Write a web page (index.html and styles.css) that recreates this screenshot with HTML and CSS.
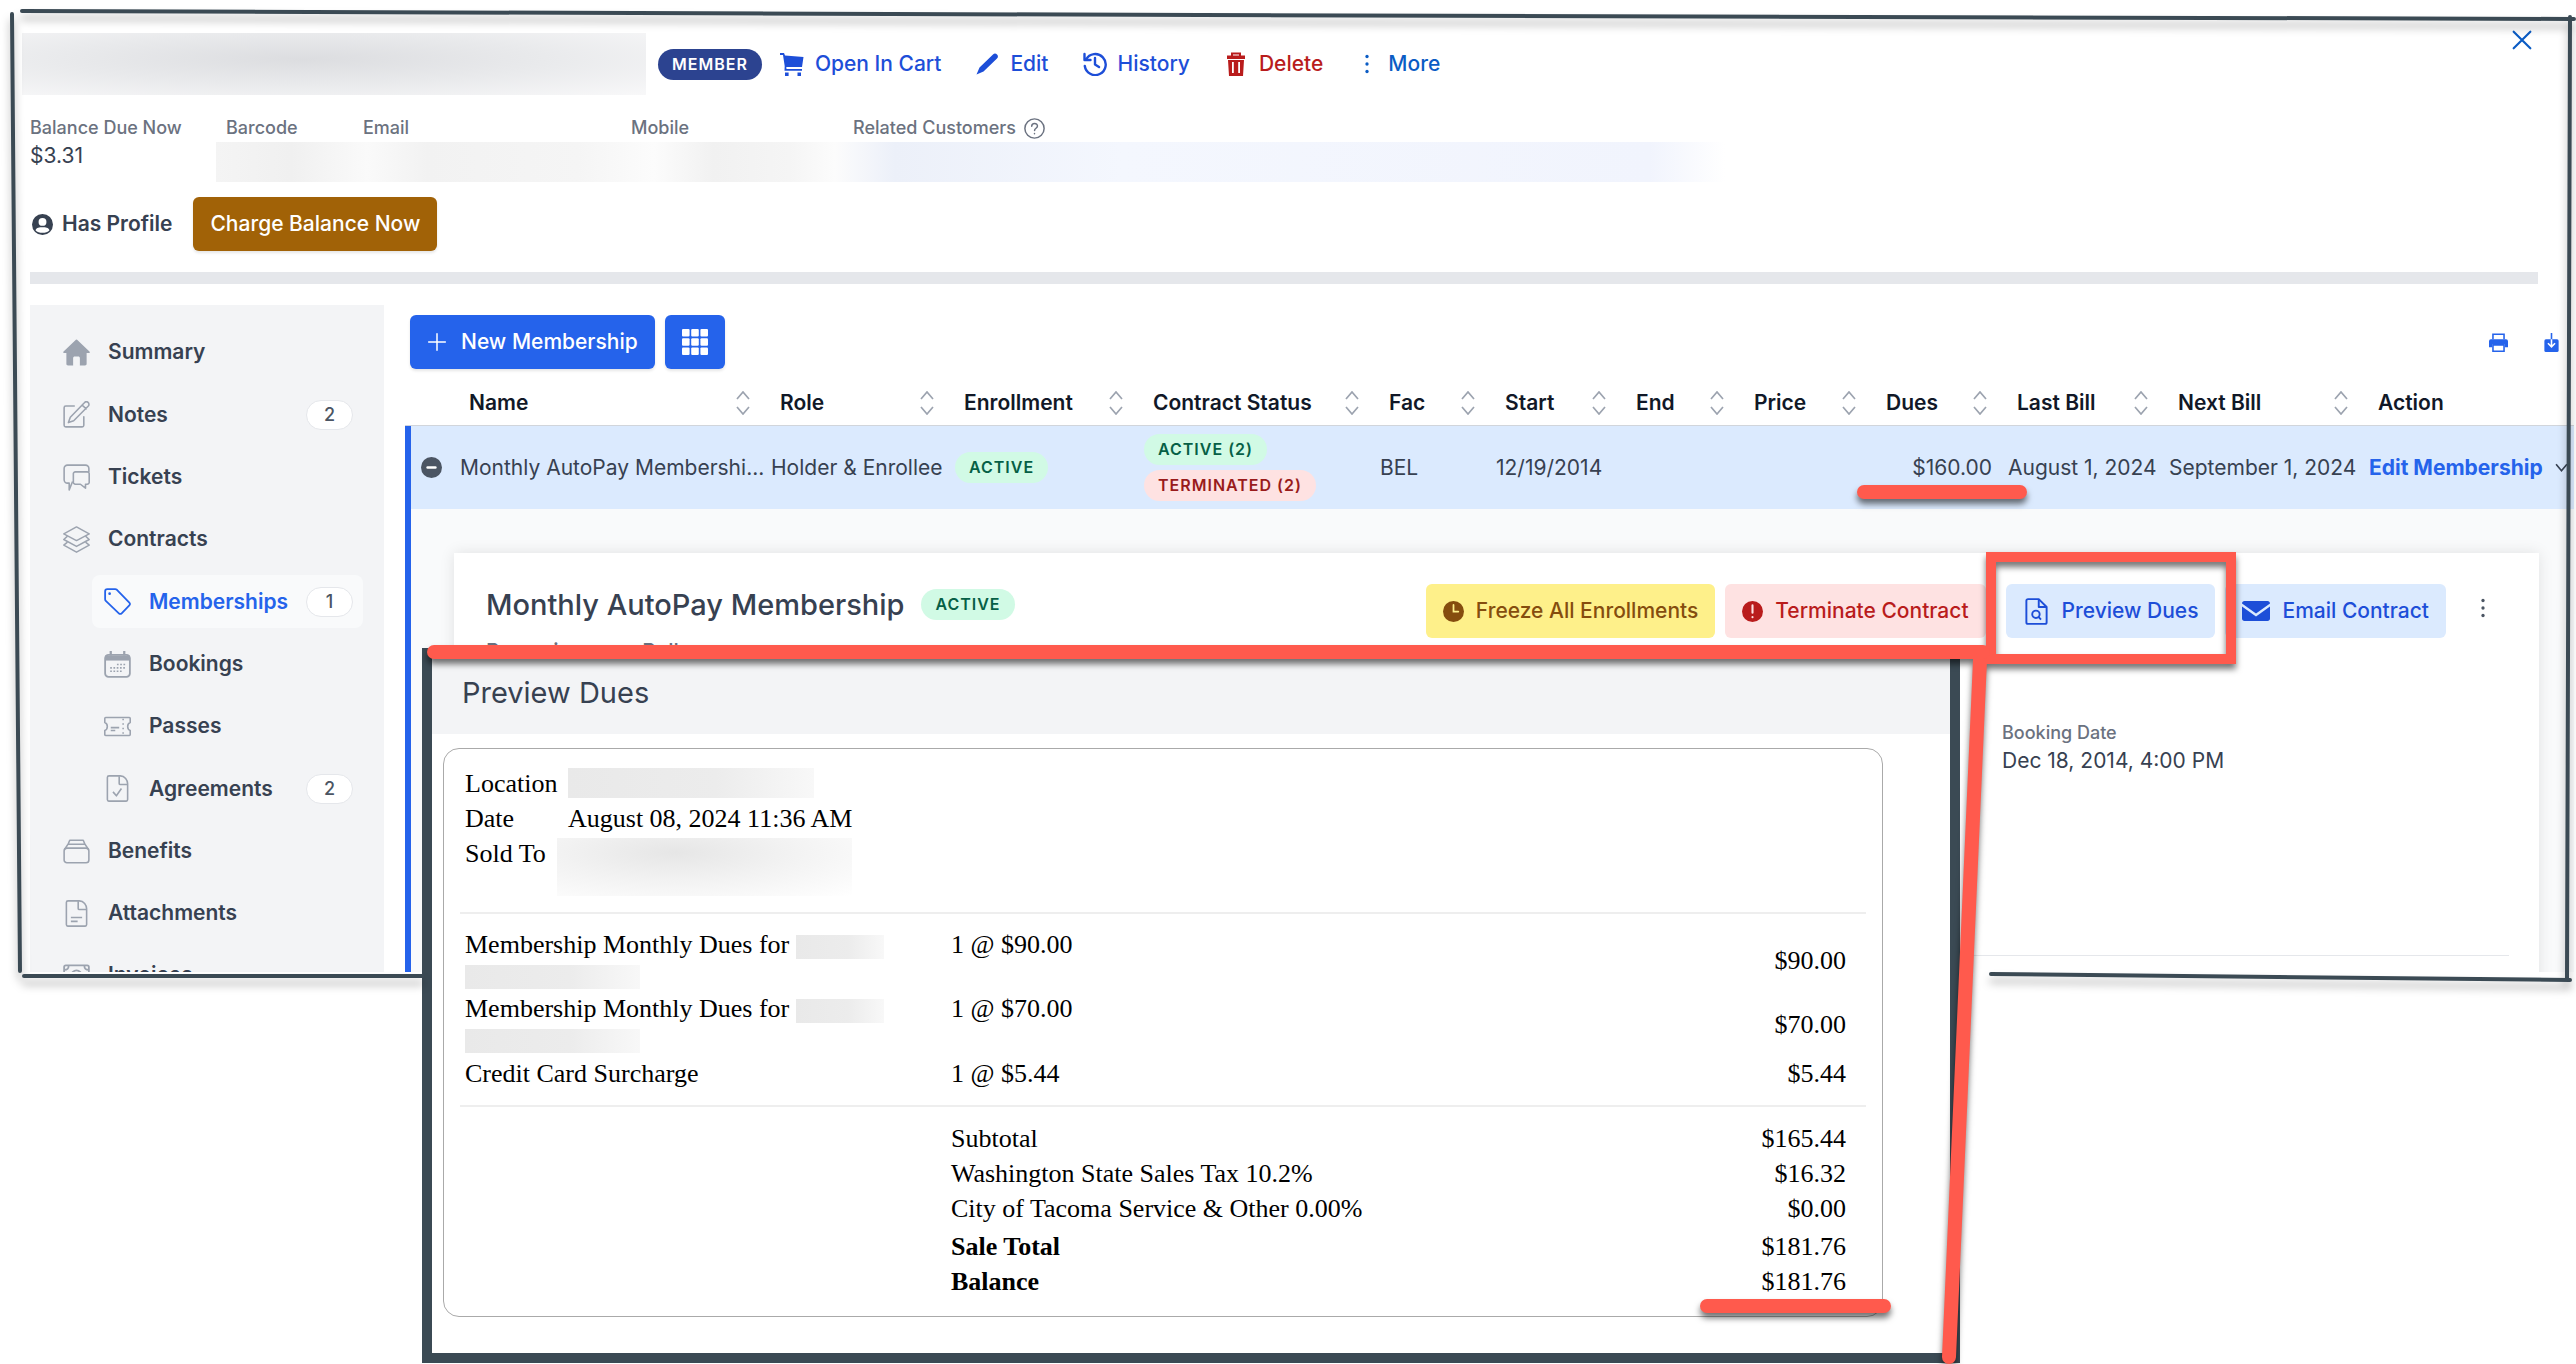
FILE: index.html
```html
<!DOCTYPE html>
<html lang="en">
<head>
  <meta charset="UTF-8">
  <meta name="viewport" content="width=device-width, initial-scale=1.0">
  <title>Customer - Memberships</title>
  <link rel="stylesheet" href="styles.css">
</head>
<body>
  <!-- icon set -->
  <svg class="sprite" aria-hidden="true">
    <symbol id="i-cart" viewBox="0 0 24 24"><path fill="currentColor" d="M0 1h4l1 2.500L23.500 5l-1.500 10H6.300l.2 2H22v1.800H4.500L4.700 14 3 3H0zM5 20.500h3.600V24H5zM17.500 20.500H21V24h-3.500z"/></symbol>
    <symbol id="i-pencil" viewBox="0 0 24 24"><path fill="currentColor" d="M18 2.500c1.500-1.500 3-1 4 0s1.500 2.500 0 4L8.500 19.500 1.500 22.500 4.500 15.500z"/></symbol>
    <symbol id="i-history" viewBox="0 0 24 24"><path fill="none" stroke="currentColor" stroke-width="2.400" stroke-linecap="round" stroke-linejoin="round" d="M3 7.500A10.500 10.500 0 1 1 1.800 14M1.500 2v6h6M12 6v6.500l4 2.500"/></symbol>
    <symbol id="i-trash" viewBox="0 0 24 24"><path fill="none" stroke="currentColor" stroke-width="2" d="M8 4V1.500h8V4"/><path fill="currentColor" fill-rule="evenodd" d="M3 3.500h18V7H3zM4 8h16l-1 16H5zM8 10v11h1.800V10zM14.200 10v11H16V10z"/></symbol>
    <symbol id="i-dots" viewBox="0 0 24 24"><circle cx="12" cy="3" r="2" fill="currentColor"/><circle cx="12" cy="12" r="2" fill="currentColor"/><circle cx="12" cy="21" r="2" fill="currentColor"/></symbol>
    <symbol id="i-help" viewBox="0 0 24 24"><g fill="none" stroke="currentColor" stroke-width="1.700" stroke-linecap="round"><circle cx="12" cy="12" r="11"/><path d="M8.800 9.500c0-4.500 6.600-4.300 6.600-.3 0 2.500-3.300 2.500-3.300 5M12 17.800v.2"/></g></symbol>
    <symbol id="i-user" viewBox="0 0 24 24"><path fill="currentColor" fill-rule="evenodd" d="M12 0a12 12 0 1 0 0 24 12 12 0 0 0 0-24zM12 4.500a4.500 4.500 0 1 1 0 9 4.500 4.500 0 0 1 0-9zM4 18.500c1.500-3.500 4-3.500 8-3.500s6.500 0 8 3.500c-3.500 4-12.500 4-16 0z"/></symbol>
    <symbol id="i-close" viewBox="0 0 24 24"><path stroke="currentColor" stroke-width="2.600" stroke-linecap="round" d="M2 2l20 20M22 2L2 22"/></symbol>
    <symbol id="i-home" viewBox="0 0 24 24"><path fill="currentColor" d="M12 0.500c.4 0 .7.200 1 .5l10.500 10c.8.800.3 1.500-.5 1.500h-2V22c0 1-.5 1.500-1.500 1.500H15V17c0-1-.5-1.500-1.500-1.500h-3C9.500 15.500 9 16 9 17v6.500H4.500C3.500 23.500 3 23 3 22v-9.500H1c-.8 0-1.300-.7-.5-1.500L11 1c.3-.3.600-.5 1-.5z"/></symbol>
    <symbol id="i-note" viewBox="0 0 24 24"><g fill="none" stroke="currentColor" stroke-width="1.400" stroke-linecap="round" stroke-linejoin="round"><path d="M10 4.500H2.500A1.500 1.500 0 0 0 1 6v15.500A1.500 1.500 0 0 0 2.500 23H17a1.500 1.500 0 0 0 1.500-1.500V14"/><path d="M19 1.500a2 2 0 0 1 3.500 3L9.500 17.500 4.800 19.200 6.500 14.500zM17 3.500l3.500 3.500"/></g></symbol>
    <symbol id="i-chat" viewBox="0 0 24 24"><g fill="none" stroke="currentColor" stroke-width="1.400" stroke-linejoin="round"><path d="M8.500 15.500L5.500 23v-6H4a3 3 0 0 1-3-3V4a3 3 0 0 1 3-3h16a3 3 0 0 1 3 3v3"/><path d="M11 7h10.500A1.800 1.800 0 0 1 23.300 9v7a1.800 1.800 0 0 1-1.800 2H20v3.500L15.500 18H11a1.800 1.800 0 0 1-1.800-2V9A1.800 1.800 0 0 1 11 7z"/></g></symbol>
    <symbol id="i-layers" viewBox="0 0 24 24"><g fill="none" stroke="currentColor" stroke-width="1.300" stroke-linejoin="round"><path d="M12 .8L23.300 7 12 13 .7 7z"/><path d="M4 9L.7 12 12 18.200 23.300 12 20 9"/><path d="M4 14.300L.7 17 12 23.300 23.300 17 20 14.300"/></g></symbol>
    <symbol id="i-tag" viewBox="0 0 24 24"><g fill="none" stroke="currentColor" stroke-width="1.600" stroke-linejoin="round"><path d="M1 3a2 2 0 0 1 2-2h7c.6 0 1 .2 1.500.6L22.500 13c.8.800.8 1.800 0 2.500l-6.800 7c-.7.700-1.800.7-2.500 0L1.600 11.500C1.200 11 1 10.600 1 10z"/></g><circle cx="5" cy="5" r="1.200" fill="currentColor"/></symbol>
    <symbol id="i-calendar" viewBox="0 0 24 24"><g fill="none" stroke="currentColor" stroke-width="1.600"><rect x="1" y="3.500" width="22" height="19.500" rx="3"/><path d="M6 0v4M18 0v4" stroke-width="2"/></g><path fill="currentColor" d="M1 4h22v4.500H1z"/><path stroke="currentColor" stroke-width="1.500" stroke-dasharray="1.500 1.400" d="M11.500 12H20M5.500 15H20M5.500 18h11.500"/></symbol>
    <symbol id="i-ticket" viewBox="0 0 24 24"><g fill="none" stroke="currentColor" stroke-width="1.400" stroke-linejoin="round"><path d="M1.500 4h21c.5 0 .8.300.8.800v3.700c-3 1-3 6 0 7v3.700c0 .5-.3.800-.8.800h-21c-.5 0-.8-.3-.8-.8v-3.700c3-1 3-6 0-7V4.800c0-.5.300-.8.800-.8z"/><path stroke-dasharray="1.500 2.500" d="M17 5v15"/><path d="M6 13h7.500M6 15.500h4"/></g></symbol>
    <symbol id="i-agreement" viewBox="0 0 24 24"><g fill="none" stroke="currentColor" stroke-width="1.400" stroke-linejoin="round"><path d="M4.500.8h10c4 0 6.500 4 6.500 7v14c0 .8-.4 1.400-1.200 1.400H4.200c-.8 0-1.200-.6-1.200-1.400V2.200C3 1.400 3.500.8 4.500.8z"/><path d="M13.500 1v6.500c0 .6.400 1 1 1H21M8 15l3 3.500 4.500-6.500"/></g></symbol>
    <symbol id="i-file" viewBox="0 0 24 24"><g fill="none" stroke="currentColor" stroke-width="1.400" stroke-linejoin="round"><path d="M4.500.8h10c4 0 6.500 4 6.500 7v14c0 .8-.4 1.400-1.200 1.400H4.200c-.8 0-1.200-.6-1.200-1.400V2.200C3 1.400 3.500.8 4.500.8z"/><path d="M13.500 1v6.500c0 .6.400 1 1 1H21M7 15.500h10M7 19h6"/></g></symbol>
    <symbol id="i-benefits" viewBox="0 0 24 24"><g fill="none" stroke="currentColor" stroke-width="1.400" stroke-linejoin="round"><rect x="1" y="9" width="22" height="13" rx="2.500"/><path d="M1.500 10l3-4.500h15l3 4.500M4.500 5.500L6 2h12l1.500 3.500"/></g></symbol>
    <symbol id="i-invoice" viewBox="0 0 24 24"><g fill="none" stroke="currentColor" stroke-width="1.600"><rect x="1" y="3" width="22" height="18" rx="1.500"/><circle cx="12" cy="12" r="4.500"/><path d="M1 7c3 0 4-1 4-4M23 7c-3 0-4-1-4-4" /></g></symbol>
    <symbol id="i-plus" viewBox="0 0 24 24"><path stroke="currentColor" stroke-width="1.800" stroke-linecap="round" d="M12 2v20M2 12h20"/></symbol>
    <symbol id="i-grid" viewBox="0 0 24 24"><g fill="currentColor"><rect width="7" height="7" rx="1"/><rect x="8.500" width="7" height="7" rx="1"/><rect x="17" width="7" height="7" rx="1"/><rect y="8.500" width="7" height="7" rx="1"/><rect x="8.500" y="8.500" width="7" height="7" rx="1"/><rect x="17" y="8.500" width="7" height="7" rx="1"/><rect y="17" width="7" height="7" rx="1"/><rect x="8.500" y="17" width="7" height="7" rx="1"/><rect x="17" y="17" width="7" height="7" rx="1"/></g></symbol>
    <symbol id="i-sort" viewBox="0 0 14 24"><path fill="none" stroke="currentColor" stroke-width="1.700" d="M1 8l6-7 6 7M1 16l6 7 6-7"/></symbol>
    <symbol id="i-printer" viewBox="0 0 24 24"><path fill="currentColor" d="M2.500 8h19A2.500 2.500 0 0 1 24 10.500V18h-4v-4H4v4H0v-7.500A2.500 2.500 0 0 1 2.500 8z"/><path fill="none" stroke="currentColor" stroke-width="2" d="M5 8V1.500h14V8M5 15h14v8H5z"/></symbol>
    <symbol id="i-download" viewBox="0 0 18 24"><rect y="8" width="18" height="16" rx="2" fill="currentColor"/><path fill="none" stroke="currentColor" stroke-width="2" d="M9 0v9"/><path fill="none" stroke="#fff" stroke-width="2" d="M9 8v9M4.500 13L9 17.500l4.500-4.500"/></symbol>
    <symbol id="i-minus" viewBox="0 0 24 24"><circle cx="12" cy="12" r="12" fill="currentColor"/><path stroke="#fff" stroke-width="2.800" stroke-linecap="round" d="M7.500 12h9"/></symbol>
    <symbol id="i-clock" viewBox="0 0 24 24"><circle cx="12" cy="12" r="12" fill="currentColor"/><path fill="none" stroke="#fef08a" stroke-width="2" stroke-linecap="round" d="M12 4.500V12h5.500"/></symbol>
    <symbol id="i-alert" viewBox="0 0 24 24"><circle cx="12" cy="12" r="12" fill="currentColor"/><path stroke="#fee2e2" stroke-width="2.400" stroke-linecap="round" d="M12 5v8.500M12 18.300v.2"/></symbol>
    <symbol id="i-preview" viewBox="0 0 24 24"><g fill="none" stroke="currentColor" stroke-width="1.700" stroke-linejoin="round"><path d="M4.500 1h9.500l7 7v13.500c0 .9-.5 1.500-1.300 1.500H4.300C3.500 23 3 22.400 3 21.500v-19C3 1.600 3.500 1 4.500 1z"/><path d="M14 1.500V8h6.500"/><circle cx="11.500" cy="14.500" r="3.300"/><path d="M14 17l2 2.200"/></g></symbol>
    <symbol id="i-mail" viewBox="0 0 28 24"><path fill="currentColor" d="M2.500 2h23C27 2 28 3 28 4.500L14 14.500 0 4.500C0 3 1 2 2.500 2zM0 7.500l14 10 14-10v12c0 1.500-1 2.500-2.500 2.500h-23C1 22 0 21 0 19.500z"/></symbol>
    <symbol id="i-chevron" viewBox="0 0 24 24"><path fill="none" stroke="currentColor" stroke-width="3" d="M2 6l10 12L22 6"/></symbol>
  </svg>

  <main class="panel">
    <header class="customer">
      <div class="customer-top">
        <span class="redacted redacted-name"></span>
        <span class="badge badge-member">MEMBER</span>
        <nav class="customer-links">
          <a href="#" class="link"><svg class="icon"><use href="#i-cart"/></svg>Open In Cart</a>
          <a href="#" class="link"><svg class="icon"><use href="#i-pencil"/></svg>Edit</a>
          <a href="#" class="link"><svg class="icon"><use href="#i-history"/></svg>History</a>
          <a href="#" class="link link-danger"><svg class="icon"><use href="#i-trash"/></svg>Delete</a>
          <a href="#" class="link link-more"><svg class="icon-small"><use href="#i-dots"/></svg>More</a>
        </nav>
        <button class="close" aria-label="Close"><svg class="icon-small"><use href="#i-close"/></svg></button>
      </div>

      <dl class="facts">
        <div class="fact fact-balance"><dt>Balance Due Now</dt><dd>$3.31</dd></div>
        <div class="fact fact-barcode"><dt>Barcode</dt></div>
        <div class="fact fact-email"><dt>Email</dt></div>
        <div class="fact fact-mobile"><dt>Mobile</dt></div>
        <div class="fact"><dt>Related Customers <svg class="icon-help"><use href="#i-help"/></svg></dt></div>
        <div class="redacted-strip"></div>
      </dl>

      <div class="profile">
        <span class="has-profile"><svg class="icon-user"><use href="#i-user"/></svg>Has Profile</span>
        <button class="btn btn-charge">Charge Balance Now</button>
      </div>
    </header>

    <div class="rule"></div>

    <div class="content">
      <aside class="sidebar">
        <a href="#" class="item"><svg class="item-icon"><use href="#i-home"/></svg>Summary</a>
        <a href="#" class="item"><svg class="item-icon"><use href="#i-note"/></svg>Notes<span class="count">2</span></a>
        <a href="#" class="item"><svg class="item-icon"><use href="#i-chat"/></svg>Tickets</a>
        <a href="#" class="item"><svg class="item-icon"><use href="#i-layers"/></svg>Contracts</a>
        <a href="#" class="item item-sub item-active"><svg class="item-icon"><use href="#i-tag"/></svg>Memberships<span class="count">1</span></a>
        <a href="#" class="item item-sub"><svg class="item-icon"><use href="#i-calendar"/></svg>Bookings</a>
        <a href="#" class="item item-sub"><svg class="item-icon"><use href="#i-ticket"/></svg>Passes</a>
        <a href="#" class="item item-sub"><svg class="item-icon"><use href="#i-agreement"/></svg>Agreements<span class="count">2</span></a>
        <a href="#" class="item"><svg class="item-icon"><use href="#i-benefits"/></svg>Benefits</a>
        <a href="#" class="item"><svg class="item-icon"><use href="#i-file"/></svg>Attachments</a>
        <a href="#" class="item"><svg class="item-icon"><use href="#i-invoice"/></svg>Invoices</a>
      </aside>

      <section class="memberships">
        <div class="toolbar">
          <button class="btn btn-primary"><svg class="icon-small"><use href="#i-plus"/></svg>New Membership</button>
          <button class="btn btn-primary btn-grid" aria-label="Grid view"><svg class="icon-grid"><use href="#i-grid"/></svg></button>
          <div class="toolbar-right">
            <button class="tool" aria-label="Print"><svg class="icon-tool"><use href="#i-printer"/></svg></button>
            <button class="tool" aria-label="Download"><svg class="icon-tool"><use href="#i-download"/></svg></button>
          </div>
        </div>

        <table class="grid">
          <colgroup>
            <col class="c-expand"><col class="c-name"><col class="c-role"><col class="c-enroll"><col class="c-status"><col class="c-fac"><col class="c-start"><col class="c-end"><col class="c-price"><col class="c-dues"><col class="c-last"><col class="c-next"><col>
          </colgroup>
          <thead>
            <tr>
              <th></th>
              <th><button class="sort">Name<svg class="icon-sort"><use href="#i-sort"/></svg></button></th>
              <th><button class="sort">Role<svg class="icon-sort"><use href="#i-sort"/></svg></button></th>
              <th><button class="sort">Enrollment<svg class="icon-sort"><use href="#i-sort"/></svg></button></th>
              <th><button class="sort">Contract Status<svg class="icon-sort"><use href="#i-sort"/></svg></button></th>
              <th><button class="sort">Fac<svg class="icon-sort"><use href="#i-sort"/></svg></button></th>
              <th><button class="sort">Start<svg class="icon-sort"><use href="#i-sort"/></svg></button></th>
              <th><button class="sort">End<svg class="icon-sort"><use href="#i-sort"/></svg></button></th>
              <th><button class="sort">Price<svg class="icon-sort"><use href="#i-sort"/></svg></button></th>
              <th><button class="sort">Dues<svg class="icon-sort"><use href="#i-sort"/></svg></button></th>
              <th><button class="sort">Last Bill<svg class="icon-sort"><use href="#i-sort"/></svg></button></th>
              <th><button class="sort">Next Bill<svg class="icon-sort"><use href="#i-sort"/></svg></button></th>
              <th><span class="sort">Action</span></th>
            </tr>
          </thead>
          <tbody>
            <tr class="row">
              <td class="expand"><button class="toggle" aria-label="Collapse"><svg class="icon-minus"><use href="#i-minus"/></svg></button></td>
              <td>Monthly AutoPay Membershi...</td>
              <td>Holder &amp; Enrollee</td>
              <td><span class="badge badge-green">ACTIVE</span></td>
              <td><div class="badges"><span class="badge badge-green">ACTIVE (2)</span><span class="badge badge-red">TERMINATED (2)</span></div></td>
              <td>BEL</td>
              <td>12/19/2014</td>
              <td></td>
              <td></td>
              <td class="num">$160.00</td>
              <td>August 1, 2024</td>
              <td>September 1, 2024</td>
              <td><button class="edit">Edit Membership<svg class="icon-chevron"><use href="#i-chevron"/></svg></button></td>
            </tr>
            <tr class="detail">
              <td colspan="13">
                <article class="card">
                  <div class="card-head">
                    <h2>Monthly AutoPay Membership</h2>
                    <span class="badge badge-green">ACTIVE</span>
                    <div class="card-actions">
                      <button class="btn btn-freeze"><svg class="icon-btn"><use href="#i-clock"/></svg>Freeze All Enrollments</button>
                      <button class="btn btn-terminate"><svg class="icon-btn"><use href="#i-alert"/></svg>Terminate Contract</button>
                      <button class="btn btn-blue btn-preview"><svg class="icon-doc"><use href="#i-preview"/></svg>Preview Dues</button>
                      <button class="btn btn-blue"><svg class="icon-mail"><use href="#i-mail"/></svg>Email Contract</button>
                      <button class="more" aria-label="More"><svg class="icon-small"><use href="#i-dots"/></svg></button>
                    </div>
                  </div>
                  <p class="card-sub"><span>Recurring</span><span>Bellevue</span></p>
                  <div class="booking">
                    <span class="booking-label">Booking Date</span>
                    <span class="booking-value">Dec 18, 2014, 4:00 PM</span>
                  </div>
                </article>
              </td>
            </tr>
          </tbody>
        </table>
      </section>
    </div>
  </main>

  <section class="modal" aria-label="Preview Dues">
    <h2 class="modal-title">Preview Dues</h2>
    <div class="receipt">
      <dl class="receipt-info">
        <dt>Location</dt><dd><span class="redacted redacted-location"></span></dd>
        <dt>Date</dt><dd>August 08, 2024 11:36 AM</dd>
        <dt>Sold To</dt><dd><span class="redacted redacted-sold"></span></dd>
      </dl>
      <table class="lines">
        <colgroup><col class="l-name"><col><col class="l-amount"></colgroup>
        <tbody class="charges">
          <tr class="two-line"><td>Membership Monthly Dues for <span class="redacted redacted-who"></span><br><span class="redacted redacted-last"></span></td><td>1 @ $90.00</td><td class="amount">$90.00</td></tr>
          <tr class="two-line"><td>Membership Monthly Dues for <span class="redacted redacted-who"></span><br><span class="redacted redacted-last"></span></td><td>1 @ $70.00</td><td class="amount">$70.00</td></tr>
          <tr><td>Credit Card Surcharge</td><td>1 @ $5.44</td><td class="amount">$5.44</td></tr>
        </tbody>
        <tbody class="totals">
          <tr><td></td><td>Subtotal</td><td class="amount">$165.44</td></tr>
          <tr><td></td><td>Washington State Sales Tax 10.2%</td><td class="amount">$16.32</td></tr>
          <tr><td></td><td>City of Tacoma Service &amp; Other 0.00%</td><td class="amount">$0.00</td></tr>
          <tr class="total"><td></td><th>Sale Total</th><td class="amount">$181.76</td></tr>
          <tr><td></td><th>Balance</th><td class="amount">$181.76</td></tr>
        </tbody>
      </table>
    </div>
  </section>

  <!-- frame and highlight strokes drawn over the page -->
  <svg class="marks" viewBox="0 0 2576 1364" aria-hidden="true">
    <g class="frame">
      <path d="M22 11L1200 15 2574 19"/>
      <path d="M12 14L20 971"/>
      <path d="M2570 17L2567 979"/>
      <path d="M24 976H422"/>
      <path d="M1991 974L2570 980"/>
    </g>
    <g class="highlight">
      <path d="M1864 492H2020"/>
      <path d="M1707 1306H1884"/>
      <path d="M1980 660L1949 1357"/>
      <path class="box" d="M1991 557H2231V659H1991Z"/>
      <path d="M434 652H1983"/>
    </g>
  </svg>
</body>
</html>
```

FILE: styles.css
```css
* {
  box-sizing: border-box;
}
body {
  margin: 0;
  min-height: 100vh;
  overflow: hidden;
  position: relative;
  background: #fff;
  color: #374151;
  font-family: Inter, sans-serif;
  font-size: 21px;
  line-height: 28px;
}
button {
  font: inherit;
  color: inherit;
  border: none;
  background: none;
  padding: 0;
  cursor: pointer;
}
a {
  color: inherit;
  text-decoration: none;
}
svg {
  flex: none;
}
.sprite {
  position: absolute;
  width: 0;
  height: 0;
}
.panel {
  max-height: 972px;
  overflow: hidden;
  padding: 34px 2px 0 30px;
}

/* customer header */
.customer-top {
  display: flex;
  align-items: center;
  height: 60px;
  margin-left: -8px;
}
.redacted {
  display: inline-block;
  background: linear-gradient(90deg, #e9e9e9, #ececec 60%, #f8f8f8);
}
.redacted-name {
  width: 624px;
  height: 62px;
  margin-right: 12px;
  background: radial-gradient(ellipse at 45% 42%, #dcdde0, #e9eaec 50%, #f8f8f9);
}
.badge {
  display: inline-block;
  padding: 0 14px;
  border-radius: 16px;
  font-size: 16px;
  font-weight: 600;
  line-height: 31px;
  letter-spacing: 1px;
  white-space: nowrap;
}
.badge-member {
  background: #2c4390;
  color: #fff;
}
.badge-green {
  background: #d1fae5;
  color: #065f46;
}
.badge-red {
  background: #fee2e2;
  color: #991b1b;
}
.customer-links {
  display: flex;
  gap: 34px;
  margin-left: 18px;
  color: #1d4ed8;
  font-weight: 500;
}
.link {
  display: flex;
  align-items: center;
  gap: 11px;
}
.link-danger {
  color: #b91c1c;
}
.link-more {
  color: #0b5cc4;
}
.icon {
  width: 24px;
  height: 24px;
}
.icon-small {
  width: 20px;
  height: 20px;
}
.close {
  margin: 0 42px 42px auto;
  color: #0b5cc4;
}
.facts {
  display: flex;
  position: relative;
  margin: 0;
  padding-top: 20px;
  height: 98px;
}
.fact dt {
  display: flex;
  align-items: center;
  gap: 8px;
  color: #6b7280;
  font-size: 18px;
  font-weight: 500;
}
.fact dd {
  margin: 0;
}
.fact-balance {
  width: 196px;
}
.fact-barcode {
  width: 137px;
}
.fact-email {
  width: 268px;
}
.fact-mobile {
  width: 222px;
}
.icon-help {
  width: 21px;
  height: 21px;
}
.redacted-strip {
  position: absolute;
  top: 48px;
  left: 186px;
  width: 1509px;
  height: 40px;
  background: linear-gradient(90deg, #f4f4f4, #f0f0f0 5%, #fafafa 10%, #f2f2f2 14%, #f5f5f5 24%, #fcfcfc 29%, #f1f1f1 33%, #f5f5f5 38%, #fcfcfc 41%, #ecf0f9 45%, #f4f7fe 60%, #f1f4fd 95%, #fff);
}
.profile {
  display: flex;
  align-items: center;
  gap: 21px;
  padding-top: 5px;
}
.has-profile {
  display: flex;
  align-items: center;
  gap: 9px;
  padding-left: 2px;
  font-weight: 600;
}
.icon-user {
  width: 21px;
  height: 21px;
}
.btn {
  display: flex;
  align-items: center;
  justify-content: center;
  height: 54px;
  padding: 0 17px;
  border-radius: 6px;
  font-weight: 500;
  white-space: nowrap;
}
.btn-charge {
  background: #a16207;
  color: #fff;
  box-shadow: 0 2px 3px rgba(0, 0, 0, 0.1);
}
.rule {
  height: 12px;
  margin: 21px 36px 21px 0;
  background: #e5e7eb;
}
.content {
  display: flex;
}

/* left navigation */
.sidebar {
  display: flex;
  flex-direction: column;
  gap: 10px;
  width: 354px;
  flex: none;
  padding: 21px;
  background: #f3f4f6;
}
.item {
  display: flex;
  align-items: center;
  gap: 18px;
  min-height: 52px;
  padding: 11px 10px 11px 12px;
  border-radius: 8px;
  font-weight: 600;
}
.item:has(.count) {
  min-height: 53px;
}
.item-sub {
  margin-left: 41px;
}
.item-active {
  background: #f9fafb;
  color: #2563eb;
}
.item-icon {
  width: 27px;
  height: 27px;
  color: #9ca3af;
}
.item-active .item-icon {
  color: #2563eb;
}
.count {
  width: 47px;
  margin-left: auto;
  border: 1px solid #e5e7eb;
  border-radius: 16px;
  background: #fff;
  color: #4b5563;
  font-size: 18px;
  font-weight: 500;
  text-align: center;
}

/* membership table */
.memberships {
  flex: 1;
  min-width: 0;
  padding: 10px 0 0 21px;
}
.toolbar {
  display: flex;
  align-items: center;
  gap: 10px;
  padding-left: 5px;
}
.btn-primary {
  gap: 14px;
  background: #2563eb;
  color: #fff;
  box-shadow: 0 2px 3px rgba(0, 0, 0, 0.1);
}
.icon-grid {
  width: 26px;
  height: 26px;
}
.toolbar-right {
  display: flex;
  gap: 34px;
  margin: 0 13px 0 auto;
  color: #2563eb;
}
.icon-tool {
  width: 19px;
  height: 19px;
}
.tool {
  display: flex;
}
.grid {
  width: 100%;
  table-layout: fixed;
  border-collapse: separate;
  border-spacing: 0;
}
.c-expand { width: 47px; }
.c-name { width: 311px; }
.c-role { width: 184px; }
.c-enroll { width: 189px; }
.c-status { width: 236px; }
.c-fac { width: 116px; }
.c-start { width: 131px; }
.c-end { width: 118px; }
.c-price { width: 132px; }
.c-dues { width: 131px; }
.c-last { width: 161px; }
.c-next { width: 200px; }
.grid th {
  height: 57px;
  padding: 12px 13px 0 17px;
  border-bottom: 1px solid #d1d5db;
  color: #111827;
  font-weight: 600;
}
.sort {
  display: flex;
  align-items: center;
  justify-content: space-between;
  width: 100%;
  white-space: nowrap;
}
.icon-sort {
  width: 14px;
  height: 24px;
  color: #9ca3af;
}
.grid td {
  padding: 0 8px;
  white-space: nowrap;
}
.row td {
  height: 83px;
  background: #dbeafe;
}
.grid .expand {
  padding: 0 0 0 10px;
}
.row td:first-child,
.detail td {
  border-left: 6px solid #2563eb;
}
.toggle {
  display: flex;
}
.icon-minus {
  width: 21px;
  height: 21px;
  color: #4b5563;
}
.badges {
  display: flex;
  flex-direction: column;
  align-items: flex-start;
  gap: 5px;
}
.grid .num {
  text-align: right;
}
.edit {
  display: flex;
  align-items: center;
  gap: 12px;
  color: #2563eb;
  font-weight: 700;
}
.icon-chevron {
  width: 13px;
  height: 13px;
  color: #374151;
}
.grid .detail td {
  padding: 44px 35px 0 43px;
  background: #f9fafb;
}

/* contract card */
.card {
  min-height: 440px;
  padding: 31px 30px 0 32px;
  background: #fff;
  box-shadow: 0 0 14px rgba(0, 0, 0, 0.1);
}
.card-head {
  display: flex;
  align-items: flex-start;
  gap: 17px;
}
.card-head > .badge {
  margin-top: 5px;
}
.card-head h2 {
  margin: 0;
  font-size: 29px;
  font-weight: 500;
  line-height: 42px;
}
.card-actions {
  display: flex;
  gap: 10px;
  margin-left: auto;
}
.card-actions .btn {
  gap: 12px;
}
.btn-freeze {
  background: #fef08a;
  color: #854d0e;
}
.btn-terminate {
  background: #fee2e2;
  color: #b91c1c;
}
.btn-blue {
  background: #dbeafe;
  color: #1d4ed8;
}
.card-actions .btn-preview {
  margin-left: 10px;
}
.icon-btn {
  width: 21px;
  height: 21px;
}
.icon-doc {
  width: 27px;
  height: 27px;
}
.icon-mail {
  width: 28px;
  height: 24px;
}
.more {
  width: 53px;
  color: #4b5563;
}
.card-sub {
  display: flex;
  gap: 58px;
  margin: 0;
  color: #6b7280;
  font-size: 21px;
  font-weight: 500;
}
.booking {
  display: flex;
  flex-direction: column;
  align-items: flex-start;
  height: 237px;
  margin-top: 53px;
  padding-left: calc(100% - 507px);
  border-bottom: 1px solid #e5e7eb;
}
.booking-label {
  color: #6b7280;
  font-size: 18px;
  font-weight: 500;
}

/* preview window over the page */
.modal {
  position: absolute;
  top: 648px;
  left: 422px;
  right: 616px;
  padding-bottom: 36px;
  border: 10px solid #3b4a54;
  background: #fff;
}
.modal-title {
  margin: 0;
  padding: 14px 30px 20px;
  background: #f3f4f6;
  font-size: 29px;
  font-weight: 400;
  line-height: 42px;
}
.receipt {
  margin: 14px 67px 0 11px;
  padding: 19px 16px 17px;
  border: 1px solid #aaa;
  border-radius: 16px;
  color: #000;
  font-family: "Liberation Serif", serif;
  font-size: 26px;
  line-height: 32px;
}
.receipt-info {
  display: grid;
  grid-template-columns: 103px 1fr;
  grid-auto-rows: 35px;
  margin: 0;
  padding: 0 5px 39px;
  border-bottom: 2px solid #eee;
}
.receipt-info dd {
  margin: 0;
}
.redacted-location {
  width: 246px;
  height: 30px;
}
.redacted-sold {
  width: 295px;
  height: 58px;
  margin-left: -11px;
  background: radial-gradient(ellipse at 40% 25%, #e6e6e6, #f2f2f2 45%, #fff);
}
.lines {
  width: 100%;
  border-collapse: collapse;
  table-layout: fixed;
}
.l-name { width: 491px; }
.l-amount { width: 200px; }
.lines td,
.lines th {
  padding: 2px 0 1px;
  font-weight: 400;
  text-align: left;
  vertical-align: top;
}
.lines td:first-child {
  padding-left: 5px;
}
.lines .amount {
  padding-right: 20px;
  text-align: right;
  vertical-align: middle;
}
.lines th {
  font-weight: 700;
}
.lines tbody::before {
  content: "";
  display: block;
  height: 14px;
}
.charges::after {
  content: "";
  display: block;
  height: 14px;
}
.lines .two-line td {
  height: 64px;
  line-height: 30px;
}
.totals {
  border-top: 2px solid #eee;
}
.total td,
.total th {
  padding-top: 5px;
}
.redacted-who {
  width: 88px;
  height: 24px;
  vertical-align: middle;
}
.redacted-last {
  width: 175px;
  height: 24px;
  vertical-align: middle;
}

/* strokes */
.marks {
  position: absolute;
  top: 0;
  left: 0;
  width: 100%;
  pointer-events: none;
}
.frame path {
  fill: none;
  stroke: #3b4a54;
  stroke-width: 4;
  stroke-linecap: round;
}
.frame {
  filter: drop-shadow(0 7px 4px rgba(0, 0, 0, 0.3));
}
.highlight path {
  fill: none;
  stroke: #ff5a4d;
  stroke-width: 14;
  stroke-linecap: round;
}
.highlight .box {
  stroke-width: 10;
  stroke-linecap: butt;
}
.highlight {
  filter: drop-shadow(0 5px 3px rgba(0, 0, 0, 0.55));
}
```
